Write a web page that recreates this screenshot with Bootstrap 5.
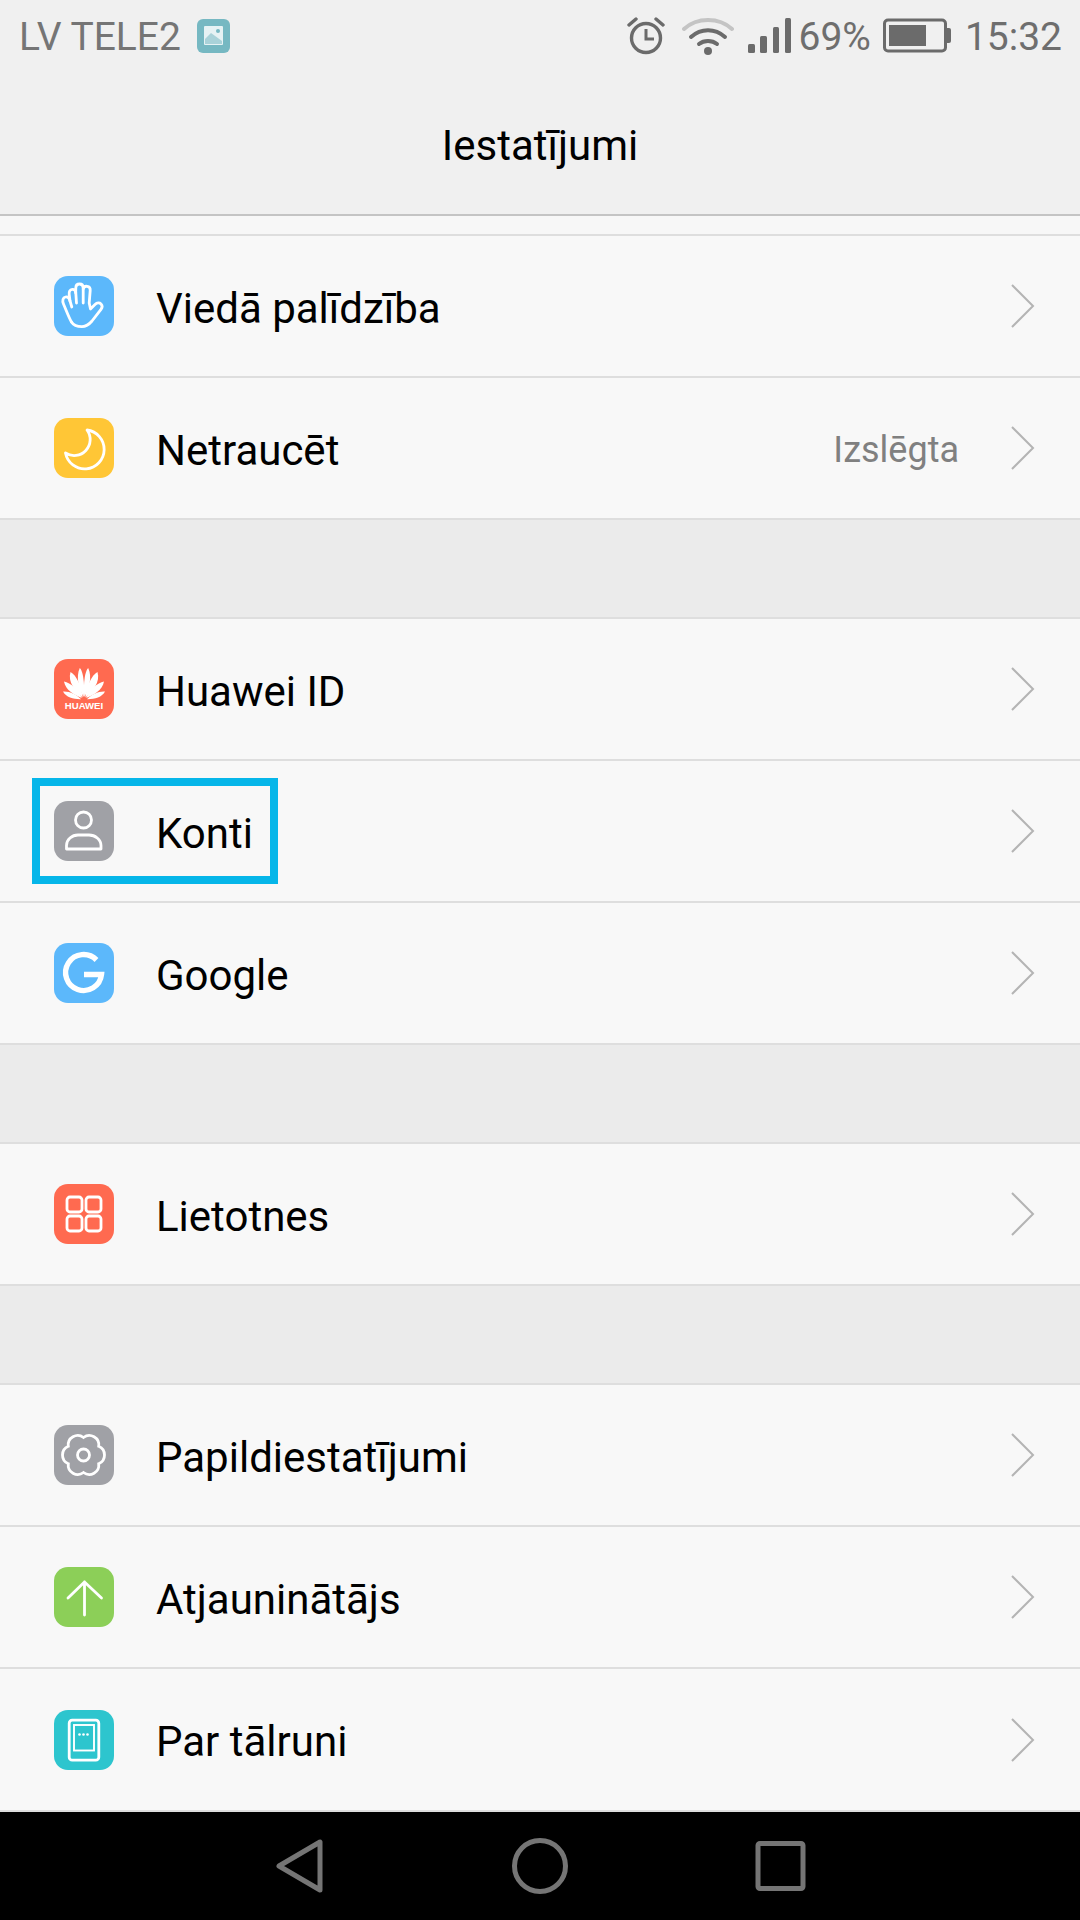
<!DOCTYPE html>
<html lang="lv">
<head>
  <meta charset="UTF-8" />
  <meta name="viewport" content="width=1080" />
  <title>Iestatījumi</title>
  <link href="https://cdn.jsdelivr.net/npm/bootstrap@5.3.0/dist/css/bootstrap.min.css" rel="stylesheet" />
  <style>
    body {
      margin: 0;
      width: 1080px;
      height: 1920px;
      overflow: hidden;
      background-color: #f7f7f7;
      font-family: Roboto, "Liberation Sans", sans-serif;
    }

    .phone-screen { width: 1080px; height: 1920px; }

    .top-area { height: 216px; background-color: #f0f0f0; border-bottom: 2px solid #c4c4c4; }
    .status-line { height: 72px; padding: 0 18px 0 19px; color: #6e6e6e; font-size: 39px; line-height: 72px; }
    .status-line .carrier { color: #757575; padding-top: 2px; }
    .status-line .pct { margin-left: 6px; margin-right: 12px; padding-top: 2px; }
    .status-line .clock { margin-left: 14px; padding-top: 2px; }
    .gap-alarm { margin-right: 17px; }
    .gap-wifi { margin-right: 14px; }
    .page-title { height: 142px; padding-top: 3px; font-size: 42px; color: #000; line-height: 142px; }

    .top-strip { height: 20px; background-color: #f7f7f7; border-bottom: 2px solid #dedede; }

    .set-group { --bs-list-group-bg: #f8f8f8; --bs-list-group-border-color: #dcdcdc; }
    .set-row {
      height: 142px;
      padding: 0 45px 0 54px;
      background-color: #f8f8f8;
      border-bottom: 2px solid #dedede !important;
      font-size: 42px;
      color: #000;
    }
    .set-last { height: 143px; }
    .set-ico { width: 60px; height: 60px; margin-right: 43px; flex-shrink: 0; border-radius: 14px; }
    .set-ico svg { display: block; }
    .set-label { padding-top: 4px; margin-left: -1px; }
    .set-val { color: #808080; font-size: 36px; padding-top: 4px; margin-right: 52px; }
    .set-gap { height: 99px; background-color: #ebebeb; border-bottom: 2px solid #dedede; }

    .ico-blue { background-color: #5cb8fb; }
    .ico-yellow { background-color: #ffc636; }
    .ico-red { background-color: #ff6a50; }
    .ico-grey { background-color: #a0a1a6; }
    .ico-green { background-color: #8ccf58; }
    .ico-teal { background-color: #2dc5ce; }

    .mark-box {
      position: absolute;
      left: 32px;
      top: 17px;
      width: 246px;
      height: 106px;
      border: 8px solid #06b6e9;
    }

    .nav-keys { height: 108px; background-color: #000; }
    .nav-keys svg { display: block; }
  </style>
</head>
<body>
  <svg width="0" height="0" class="position-absolute">
    <symbol id="chev" viewBox="0 0 24 44"><path d="M1 1 L22 22 L1 43" fill="none" stroke="#b4b4b4" stroke-width="2" /></symbol>
  </svg>

  <div class="phone-screen d-flex flex-column">
    <div class="top-area flex-shrink-0">
      <div class="status-line d-flex align-items-center">
        <span class="carrier">LV TELE2</span>
        <svg class="ms-3" width="34" height="36" viewBox="0 0 34 36">
          <rect width="33" height="34" y="1" rx="6" fill="#76b8c2" />
          <rect x="7" y="8" width="19" height="19" rx="1" fill="#e6f2f4" />
          <path d="M8 21 L14 15 L25 23 V26 H8 Z" fill="#76b8c2" opacity=".55" />
          <circle cx="21" cy="13" r="2" fill="#76b8c2" />
        </svg>
        <span class="ms-auto d-flex align-items-center">
          <svg class="gap-alarm" width="38" height="40" viewBox="0 0 38 40">
            <circle cx="19" cy="22" r="14.5" fill="none" stroke="#6b6b6b" stroke-width="3.4" />
            <path d="M19 13 V23 H27" fill="none" stroke="#6b6b6b" stroke-width="3" />
            <path d="M2 9 L9 3 M36 9 L29 3" stroke="#6b6b6b" stroke-width="3.4" stroke-linecap="round" />
          </svg>
          <svg class="gap-wifi" width="52" height="40" viewBox="0 0 52 40">
            <path d="M2 13 C15 1 37 1 50 13" fill="none" stroke="#c4c4c4" stroke-width="4" stroke-linecap="round" />
            <path d="M9 21 C19 12 33 12 43 21" fill="none" stroke="#6b6b6b" stroke-width="4" stroke-linecap="round" />
            <path d="M17 28 C22 24 30 24 35 28" fill="none" stroke="#6b6b6b" stroke-width="4" stroke-linecap="round" />
            <circle cx="26" cy="35" r="4" fill="#6b6b6b" />
          </svg>
          <svg width="44" height="38" viewBox="0 0 44 38">
            <rect x="0" y="27" width="7" height="9" rx="1.5" fill="#6b6b6b" />
            <rect x="12" y="19" width="7" height="17" rx="1.5" fill="#6b6b6b" />
            <rect x="25" y="10" width="6" height="26" rx="1.5" fill="#6b6b6b" />
            <rect x="37" y="1" width="6" height="35" rx="1.5" fill="#6b6b6b" />
          </svg>
          <span class="pct">69%</span>
          <svg width="68" height="36" viewBox="0 0 68 36">
            <rect x="1.5" y="2" width="61" height="31" rx="3.5" fill="none" stroke="#6b6b6b" stroke-width="3" />
            <rect x="6" y="7" width="37" height="21" fill="#6b6b6b" />
            <path d="M64 10 h2 a2 2 0 0 1 2 2 v11 a2 2 0 0 1 -2 2 h-2 z" fill="#6b6b6b" />
          </svg>
          <span class="clock">15:32</span>
        </span>
      </div>
      <div class="page-title text-center">Iestatījumi</div>
    </div>

    <div class="top-strip flex-shrink-0"></div>

    <div class="list-group list-group-flush set-group rounded-0">
      <a class="list-group-item set-row d-flex align-items-center">
        <span class="set-ico ico-blue">
          <svg width="60" height="60" viewBox="0 0 60 60" fill="none" stroke="#fff" stroke-width="2.8" stroke-linecap="round" stroke-linejoin="round">
            <path d="M17.5 46 C15 42 12.5 35 9.5 28 C8 24.5 9 21.5 11.5 21 C14 20.5 15.4 22.5 16 25 L17.8 31" />
            <path d="M16 25 L15.2 18.5 C14.8 15.5 16 13.5 18.2 13.3 C20.4 13.1 21.6 15 21.8 17 L22.5 27" />
            <path d="M21.7 17 L21.8 12 C21.8 9.5 23.4 8 25.6 8 C27.8 8 29.2 9.5 29.2 12 L29.2 27" />
            <path d="M29.2 13 C29.6 11 31.2 10 33.2 10.3 C35.2 10.6 36.4 12.3 36.2 14.5 L35.2 27 L36.5 33 L41 28.5 C43 26.6 45.6 26.6 47 28 C48.4 29.4 48.5 31.4 47 33.4 L38 45 C35 48.6 32 50.6 28 50.6 C23 50.6 19.6 49.5 17.5 46" />
          </svg>
        </span>
        <span class="set-label">Viedā palīdzība</span>
        <svg class="ms-auto" width="24" height="44"><use href="#chev" /></svg>
      </a>
      <a class="list-group-item set-row d-flex align-items-center">
        <span class="set-ico ico-yellow">
          <svg width="60" height="60" viewBox="0 0 60 60" fill="none" stroke="#fff" stroke-width="2.8" stroke-linejoin="round">
            <path d="M33 12 A19.5 19.5 0 1 1 11.5 35 A 16 16 0 0 0 33 12 Z" />
          </svg>
        </span>
        <span class="set-label">Netraucēt</span>
        <span class="set-val ms-auto">Izslēgta</span>
        <svg width="24" height="44"><use href="#chev" /></svg>
      </a>
    </div>

    <div class="set-gap flex-shrink-0"></div>

    <div class="list-group list-group-flush set-group rounded-0">
      <a class="list-group-item set-row d-flex align-items-center">
        <span class="set-ico ico-red">
          <svg width="60" height="60" viewBox="0 0 60 60" fill="#fff">
            <g id="fan">
              <path d="M29.6 38 C25 30 21.5 18 25.8 9 C29.4 12 31 28 29.6 38 Z" />
              <path d="M28.6 38.5 C21 32 13.5 23 16.5 13 C22 15.5 28 28 28.6 38.5 Z" />
              <path d="M27.8 39 C20 36 11.5 31 10 22.5 C16.5 23.5 24.5 31 27.8 39 Z" />
              <path d="M27 40.2 C20 40.4 12 38.5 9 32.5 C15 32 23 35.5 27 40.2 Z" />
            </g>
            <use href="#fan" transform="translate(60 0) scale(-1 1)" />
            <text x="30" y="50" text-anchor="middle" font-family="Liberation Sans, sans-serif" font-weight="700" font-size="9.6">HUAWEI</text>
          </svg>
        </span>
        <span class="set-label">Huawei ID</span>
        <svg class="ms-auto" width="24" height="44"><use href="#chev" /></svg>
      </a>
      <a class="list-group-item set-row d-flex align-items-center position-relative">
        <span class="set-ico ico-grey">
          <svg width="60" height="60" viewBox="0 0 60 60" fill="none" stroke="#fff" stroke-width="2.8" stroke-linejoin="round">
            <circle cx="29.5" cy="19" r="8" />
            <path d="M12.5 48 V44.5 C12.5 38.5 18 34 24 34 H35 C41 34 47 38.5 47 44.5 V48 Z" />
          </svg>
        </span>
        <span class="set-label">Konti</span>
        <svg class="ms-auto" width="24" height="44"><use href="#chev" /></svg>
        <span class="mark-box"></span>
      </a>
      <a class="list-group-item set-row d-flex align-items-center">
        <span class="set-ico ico-blue">
          <svg width="60" height="60" viewBox="0 0 60 60" fill="none" stroke="#fff" stroke-width="5.4">
            <path d="M42.5 17 A18 18 0 1 0 47.5 31.5 H30" />
          </svg>
        </span>
        <span class="set-label">Google</span>
        <svg class="ms-auto" width="24" height="44"><use href="#chev" /></svg>
      </a>
    </div>

    <div class="set-gap flex-shrink-0"></div>

    <div class="list-group list-group-flush set-group rounded-0">
      <a class="list-group-item set-row d-flex align-items-center">
        <span class="set-ico ico-red">
          <svg width="60" height="60" viewBox="0 0 60 60" fill="none" stroke="#fff" stroke-width="2.8">
            <rect x="13" y="13" width="15" height="15" rx="3" />
            <rect x="32" y="13" width="15" height="15" rx="3" />
            <rect x="13" y="32" width="15" height="15" rx="3" />
            <rect x="32" y="32" width="15" height="15" rx="3" />
          </svg>
        </span>
        <span class="set-label">Lietotnes</span>
        <svg class="ms-auto" width="24" height="44"><use href="#chev" /></svg>
      </a>
    </div>

    <div class="set-gap flex-shrink-0"></div>

    <div class="list-group list-group-flush set-group rounded-0">
      <a class="list-group-item set-row d-flex align-items-center">
        <span class="set-ico ico-grey">
          <svg width="60" height="60" viewBox="0 0 60 60" fill="none" stroke="#fff" stroke-width="2.8">
            <path d="M29.5 12.5 A9.5 9.5 0 0 1 44.7 21.25 A9.5 9.5 0 0 1 44.7 38.75 A9.5 9.5 0 0 1 29.5 47.5 A9.5 9.5 0 0 1 14.3 38.75 A9.5 9.5 0 0 1 14.3 21.25 A9.5 9.5 0 0 1 29.5 12.5 Z" />
            <circle cx="29.5" cy="30" r="6" />
          </svg>
        </span>
        <span class="set-label">Papildiestatījumi</span>
        <svg class="ms-auto" width="24" height="44"><use href="#chev" /></svg>
      </a>
      <a class="list-group-item set-row d-flex align-items-center">
        <span class="set-ico ico-green">
          <svg width="60" height="60" viewBox="0 0 60 60" fill="none" stroke="#fff" stroke-width="2.8" stroke-linecap="round" stroke-linejoin="round">
            <path d="M30.5 15 V48 M14 31 L30.5 15 L47.5 31" />
          </svg>
        </span>
        <span class="set-label">Atjauninātājs</span>
        <svg class="ms-auto" width="24" height="44"><use href="#chev" /></svg>
      </a>
      <a class="list-group-item set-row set-last d-flex align-items-center">
        <span class="set-ico ico-teal">
          <svg width="60" height="60" viewBox="0 0 60 60" fill="none" stroke="#fff">
            <rect x="15.2" y="10.2" width="29.6" height="40" rx="3" stroke-width="2.8" />
            <rect x="20" y="15" width="20" height="25.5" stroke-width="1.9" />
            <g fill="#fff" stroke="none"><circle cx="25.5" cy="24.5" r="1.3" /><circle cx="29.5" cy="24.5" r="1.3" /><circle cx="33.5" cy="24.5" r="1.3" /></g>
          </svg>
        </span>
        <span class="set-label">Par tālruni</span>
        <svg class="ms-auto" width="24" height="44"><use href="#chev" /></svg>
      </a>
    </div>

    <div class="nav-keys mt-auto">
      <svg width="1080" height="108" viewBox="0 0 1080 108" fill="none" stroke="#757575" stroke-width="5" stroke-linejoin="round">
        <path d="M279 54 L320 30 V78 Z" />
        <circle cx="540" cy="54" r="25.5" />
        <rect x="758" y="31.5" width="45" height="45" rx="2" />
      </svg>
    </div>
  </div>

  <script src="https://cdn.jsdelivr.net/npm/bootstrap@5.3.0/dist/js/bootstrap.bundle.min.js"></script>
</body>
</html>
